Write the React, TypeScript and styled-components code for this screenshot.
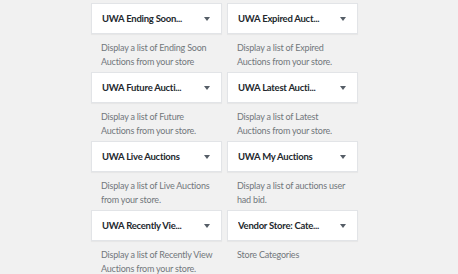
import styled, { createGlobalStyle } from 'styled-components';

const GlobalStyle = createGlobalStyle`
  html, body {
    margin: 0;
    padding: 0;
    background: #f1f1f1;
    font-family: Lato, "Liberation Sans", sans-serif;
  }
`;

const widgets = [
  { title: 'UWA Ending Soon...', desc: 'Display a list of Ending Soon Auctions from your store' },
  { title: 'UWA Expired Auct...', desc: 'Display a list of Expired Auctions from your store.' },
  { title: 'UWA Future Aucti...', desc: 'Display a list of Future Auctions from your store.' },
  { title: 'UWA Latest Aucti...', desc: 'Display a list of Latest Auctions from your store.' },
  { title: 'UWA Live Auctions', desc: 'Display a list of Live Auctions from your store.' },
  { title: 'UWA My Auctions', desc: 'Display a list of auctions user had bid.' },
  { title: 'UWA Recently Vie...', desc: 'Display a list of Recently View Auctions from your store.' },
  { title: 'Vendor Store: Cate...', desc: 'Store Categories' },
];

export default function App() {
  return (
    <>
      <GlobalStyle />
      <Page>
        <WidgetGrid>
          {widgets.map((w) => (
            <Widget key={w.title}>
              <Card>
                <Title>{w.title}</Title>
                <Arrow />
              </Card>
              <Desc>{w.desc}</Desc>
            </Widget>
          ))}
        </WidgetGrid>
      </Page>
    </>
  );
}

const Page = styled.div`
  padding: 3px 0 0 91px;
`;

const WidgetGrid = styled.div`
  display: grid;
  grid-template-columns: 131px 131px;
  grid-auto-rows: 69px;
  column-gap: 5px;
`;

const Widget = styled.div`
  display: flex;
  flex-direction: column;
`;

const Card = styled.div`
  box-sizing: border-box;
  height: 31px;
  display: flex;
  align-items: center;
  gap: 8px;
  padding: 0 11px 0 10px;
  background: #fff;
  border: 1px solid #e2e4e7;
  box-shadow: 0 1px 1px rgba(0, 0, 0, 0.04);
`;

const Title = styled.span`
  flex: 1;
  min-width: 0;
  overflow: hidden;
  font-size: 9.5px;
  font-weight: 700;
  letter-spacing: -0.25px;
  color: #23282d;
  white-space: nowrap;
`;

const Arrow = styled.span`
  flex: none;
  width: 0;
  height: 0;
  border-left: 3.5px solid transparent;
  border-right: 3.5px solid transparent;
  border-top: 4px solid #555d66;
`;

const Desc = styled.p`
  margin: 7px 0 0;
  padding: 0 6px 0 10px;
  font-size: 9px;
  line-height: 13.5px;
  letter-spacing: -0.2px;
  color: #72777c;
`;
